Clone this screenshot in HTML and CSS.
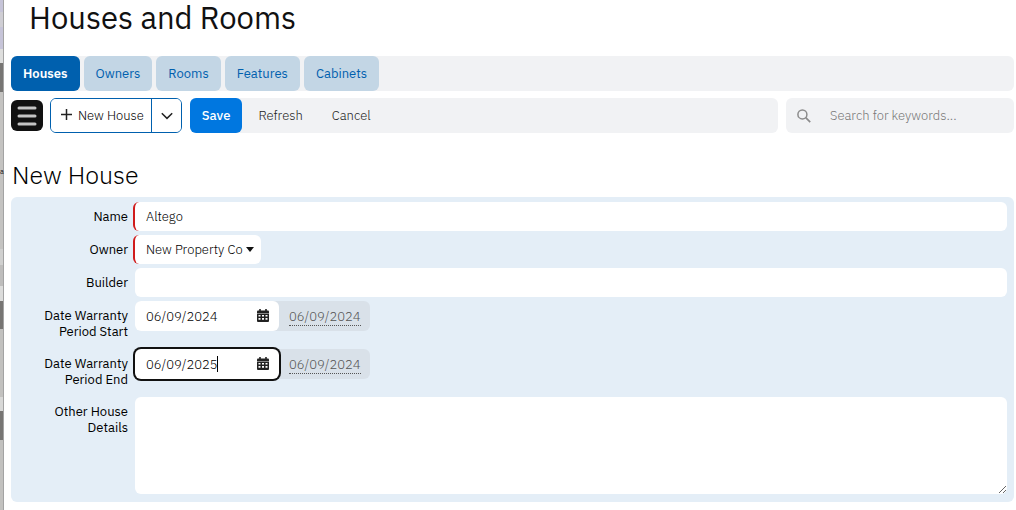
FILE: index.html
```html
<!DOCTYPE html>
<html lang="en">
<head>
    <meta charset="UTF-8">
    <meta name="viewport" content="width=device-width, initial-scale=1.0">
    <title>Houses and Rooms</title>
    <link rel="stylesheet" href="styles.css">
</head>
<body>
    <aside class="page-edge">a</aside>

    <main class="content">
        <h1>Houses and Rooms</h1>

        <nav class="tabs">
            <a href="#houses" class="tab active">Houses</a>
            <a href="#owners" class="tab">Owners</a>
            <a href="#rooms" class="tab">Rooms</a>
            <a href="#features" class="tab">Features</a>
            <a href="#cabinets" class="tab">Cabinets</a>
        </nav>

        <div class="toolbar">
            <button type="button" class="menu-btn" aria-label="Menu">
                <svg width="20" height="20" viewBox="0 0 20 20"><path d="M2 2h16M2 10h16M2 18h16" stroke="#c4c4c4" stroke-width="3" stroke-linecap="round"/></svg>
            </button>
            <div class="split-btn">
                <button type="button" class="new-btn">
                    <svg width="11" height="13" viewBox="0 0 11 13"><path d="M5.5 0v11M0 5.5h11" stroke="#222" stroke-width="1.5"/></svg>
                    New House
                </button>
                <button type="button" class="more-btn" aria-label="More actions">
                    <svg width="12" height="8" viewBox="0 0 12 8"><path d="M.8 1.2L6 6.4l5.2-5.2" fill="none" stroke="#222" stroke-width="1.5"/></svg>
                </button>
            </div>
            <div class="actions">
                <button type="submit" form="houseForm" class="save-btn">Save</button>
                <button type="button" class="plain-btn">Refresh</button>
                <button type="button" class="plain-btn">Cancel</button>
            </div>
            <label class="search">
                <svg width="14" height="14" viewBox="0 0 14 14"><circle cx="5.4" cy="5.4" r="4.5" fill="none" stroke="#8b8b8b" stroke-width="1.5"/><path d="M8.7 8.7l4.5 4.5" stroke="#8b8b8b" stroke-width="1.7"/></svg>
                <input type="search" placeholder="Search for keywords..." aria-label="Search for keywords">
            </label>
        </div>

        <h2>New House</h2>

        <form id="houseForm" class="panel">
            <div class="row">
                <label for="name">Name</label>
                <input type="text" id="name" class="field required" value="Altego">
            </div>
            <div class="row">
                <label for="owner">Owner</label>
                <div class="select-wrap">
                    <select id="owner" class="field required">
                        <option>New Property Co</option>
                    </select>
                    <svg class="arrow" width="8" height="5" viewBox="0 0 8 5"><path d="M0 0h8L4 5z" fill="#111"/></svg>
                </div>
            </div>
            <div class="row">
                <label for="builder">Builder</label>
                <input type="text" id="builder" class="field">
            </div>
            <div class="row">
                <label for="warrantyStart">Date Warranty Period Start</label>
                <div class="date-group">
                    <div class="date-box">
                        <input type="text" id="warrantyStart" value="06/09/2024">
                        <button type="button" class="cal-btn" aria-label="Pick start date">
                            <svg width="12" height="13" viewBox="0 0 12 13"><path d="M3 0v3M9 0v3" stroke="#222" stroke-width="1.6"/><rect y="1.5" width="12" height="11.5" rx="1" fill="#222"/><path d="M0 4.5h12" stroke="#888" stroke-width="1"/><path d="M1.5 6h2v1.5h-2zM5 6h2v1.5H5zM8.5 6h2v1.5h-2zM1.5 9h2v1.7h-2zM5 9h2v1.7H5zM8.5 9h2v1.7h-2z" fill="#fff"/></svg>
                        </button>
                    </div>
                    <a href="#today" class="today"><span>06/09/2024</span></a>
                </div>
            </div>
            <div class="row">
                <label for="warrantyEnd">Date Warranty Period End</label>
                <div class="date-group">
                    <div class="date-box focused">
                        <input type="text" id="warrantyEnd" value="06/09/2025">
                        <span class="caret"></span>
                        <button type="button" class="cal-btn" aria-label="Pick end date">
                            <svg width="12" height="13" viewBox="0 0 12 13"><path d="M3 0v3M9 0v3" stroke="#222" stroke-width="1.6"/><rect y="1.5" width="12" height="11.5" rx="1" fill="#222"/><path d="M0 4.5h12" stroke="#888" stroke-width="1"/><path d="M1.5 6h2v1.5h-2zM5 6h2v1.5H5zM8.5 6h2v1.5h-2zM1.5 9h2v1.7h-2zM5 9h2v1.7H5zM8.5 9h2v1.7h-2z" fill="#fff"/></svg>
                        </button>
                    </div>
                    <a href="#today" class="today"><span>06/09/2024</span></a>
                </div>
            </div>
            <div class="row">
                <label for="details">Other House Details</label>
                <textarea id="details" class="field"></textarea>
            </div>
        </form>
    </main>
</body>
</html>
```
FILE: styles.css
```css
* { box-sizing: border-box; }
body { margin: 0; display: flex; min-height: 100vh; background: #fff; color: #111; font: 13px/16px "IBM Plex Sans", Roboto, sans-serif; }
button, input, select, textarea { font: inherit; font-weight: 300; color: #000; border: none; margin: 0; }
button { cursor: pointer; }
svg { display: block; flex: none; }

/* sliver of the page behind the dialog */
.page-edge {
    flex: none; width: 4px; padding-top: 164px; font-size: 7px; box-shadow: inset -1px 0 #a3a3a3;
    background: linear-gradient(#c6c4d8 12px, #cfced4 12px 27px, #c6c4d8 27px 49px, #dededd 49px 63px, #777573 63px 92px, #c4c3c1 92px 249px, #d0d0cf 249px 265px, #bebdbc 265px 286px, #dcdcdb 286px 301px, #777573 301px 329px, #c2c1bf 329px 397px, #d8d8d7 397px 411px, #777573 411px 440px, #c2c1bf 440px);
}

.content { flex: 1; min-width: 0; padding: 0 2px 8px 7px; }
h1 { margin: 0 0 20px 18px; font-size: 31px; line-height: 36px; font-weight: 400; }
h2 { margin: 26px 0 6px 1px; font-size: 25px; line-height: 32px; font-weight: 300; color: #000; }

.tabs { display: flex; gap: 4px; background: #f1f2f4; border-radius: 6px; }
.tab { padding: 10px 12px 9px; border-radius: 6px; background: #c3d6e5; color: #0060ae; text-decoration: none; }
.tab.active { background: #0060ae; color: #fff; font-weight: 600; }

.toolbar { display: flex; align-items: center; margin-top: 7px; gap: 8px; }
.menu-btn { width: 32px; height: 31px; margin-right: -1px; padding: 0 6px; border-radius: 6px; background: #111; }
.split-btn { display: flex; height: 35px; border: 1px solid #0060ae; border-radius: 6px; overflow: hidden; }
.new-btn { display: flex; align-items: center; gap: 6px; padding: 0 7px 0 10px; background: #fff; }
.more-btn { width: 30px; padding: 0 9px; background: #fff; border-left: 1px solid #0060ae; }
.actions { flex: 1; display: flex; height: 35px; background: #f1f2f4; border-radius: 6px; }
.save-btn { padding: 0 12px; border-radius: 6px; background: #0077e0; color: #fff; font-weight: 500; }
.plain-btn { padding: 0 13px 0 16px; background: none; color: #222; }
.search { display: flex; align-items: center; gap: 19px; width: 228px; height: 35px; padding: 0 11px; background: #f1f2f4; border-radius: 6px; }
.search input { flex: 1; min-width: 0; padding: 0; background: none; outline: none; }
.search input::placeholder { color: #777; opacity: 1; }

.panel { display: flex; flex-direction: column; gap: 4px; padding: 5px 7px 8px 0; background: #e4eef7; border-radius: 6px; }
.row { display: flex; align-items: flex-start; gap: 7px; }
.row > label { flex: none; width: 117px; padding: 7px 0 5px 24px; text-align: right; color: #000; }
.field { flex: 1; min-width: 0; height: 29px; padding: 0 11px; border-radius: 6px; background: #fff; }
.required { margin-left: -2px; border-left: 2px solid #d01c1c; }
.select-wrap { position: relative; display: flex; }
select.field { padding-right: 18px; appearance: none; }
.arrow { position: absolute; right: 7px; top: 12px; pointer-events: none; }
textarea.field { height: 97px; padding: 6px 11px; resize: vertical; }

.date-group { display: flex; height: 30px; background: #d9e1e9; border-radius: 6px; }
.date-box { position: relative; display: flex; align-items: center; width: 144px; padding: 0 10px 0 11px; background: #fff; border-radius: 6px; }
.date-box input { flex: 1; min-width: 0; padding: 2px 0 0; background: none; outline: none; }
.date-box.focused { box-shadow: 0 0 0 2px #111; }
.caret { position: absolute; left: 82px; top: 7px; width: 1px; height: 16px; background: #000; }
.cal-btn { padding: 0 0 2px; background: none; }
.today { padding: 8px 9px 6px 10px; color: #555; font-weight: 300; text-decoration: none; }
.today span { border-bottom: 1px dotted #555; }
```
